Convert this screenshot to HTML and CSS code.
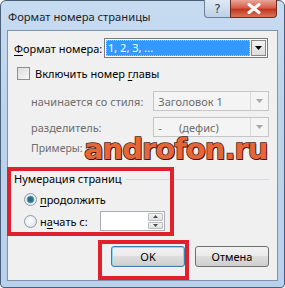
FILE: index.html
```html
<!DOCTYPE html>
<html lang="ru">
<head>
<meta charset="utf-8">
<link rel="stylesheet" href="styles.css">
</head>
<body>
<div class="window">
  <div class="titlebar">
    <span class="title">Формат номера страницы</span>
    <div class="tbtns">
      <span class="tb help">?</span>
      <span class="tb close"><svg width="14" height="11" viewBox="0 0 14 11"><path d="M2 1.5 L12 9.5 M12 1.5 L2 9.5" stroke="#fff" stroke-width="3" stroke-linecap="round"/></svg></span>
    </div>
  </div>
  <div class="client">
    <div class="row r1">
      <span class="lbl"><u>Ф</u>ормат номера:</span>
      <div class="combo active">
        <span class="sel">1, 2, 3, ...</span>
        <span class="dd"><svg width="7" height="4" viewBox="0 0 7 4"><path d="M0 0H7L3.5 4Z" fill="#000"/></svg></span>
      </div>
    </div>
    <div class="row r2">
      <span class="chk"></span>
      <span class="lbl">Включить номер <u>г</u>лавы</span>
    </div>
    <div class="row r3 dis">
      <span class="lbl ind">начинается со стиля:</span>
      <div class="combo off"><span class="val">Заголовок 1</span><span class="dd2"><svg width="7" height="4" viewBox="0 0 7 4"><path d="M0 0H7L3.5 4Z" fill="#a8a8a8"/></svg></span></div>
    </div>
    <div class="row r4 dis">
      <span class="lbl ind">разделитель:</span>
      <div class="combo off"><span class="val">-&nbsp;&nbsp;&nbsp;&nbsp;&nbsp;&nbsp;(дефис)</span><span class="dd2"><svg width="7" height="4" viewBox="0 0 7 4"><path d="M0 0H7L3.5 4Z" fill="#a8a8a8"/></svg></span></div>
    </div>
    <div class="row r5 dis">
      <span class="lbl ind">Примеры:</span>
    </div>
    <div class="group">
      <span class="gtitle">Нумерация страниц</span>
      <span class="gline"></span>
    </div>
    <div class="row r6">
      <span class="radio on"></span>
      <span class="lbl"><u>п</u>родолжить</span>
    </div>
    <div class="row r7">
      <span class="radio"></span>
      <span class="lbl rl">н<u>а</u>чать с:</span>
      <div class="spin"><span class="spinbtns"><span class="sb"><svg width="5" height="3" viewBox="0 0 5 3"><path d="M0 3H5L2.5 0Z" fill="#4d4d4d"/></svg></span><span class="sb"><svg width="5" height="3" viewBox="0 0 5 3"><path d="M0 0H5L2.5 3Z" fill="#4d4d4d"/></svg></span></span></div>
    </div>
    <div class="buttons">
      <span class="btn ok">OK</span>
      <span class="btn">Отмена</span>
    </div>
    <div class="mark m1"></div>
    <div class="mark m2"></div>
    <div class="wm">androfon.ru</div>
  </div>
</div>
</body>
</html>
```
FILE: styles.css
```css
html, body { margin: 0; padding: 0; }
body {
  width: 285px; height: 288px; overflow: hidden;
  font-family: "Noto Sans", "Open Sans", sans-serif;
  font-size: 11px; color: #000;
}
.window {
  box-sizing: border-box;
  width: 285px; height: 288px;
  border: 1px solid #4a6078;
  border-radius: 6px 6px 4px 4px;
  background: linear-gradient(180deg, #c7dbf1 0%, #bcd3ec 40%, #b9d1ea 100%);
  display: flex; flex-direction: column;
  padding: 0 6px 6px 6px;
}
.titlebar {
  height: 29px; display: flex; align-items: flex-start; position: relative;
}
.title {
  margin-top: 8px; margin-left: 1px;
  font-size: 11.2px; color: #1e1e1e;
}
.tbtns {
  margin-left: auto; display: flex; margin-top: -1px; margin-right: 1px;
}
.tb {
  height: 17px; display: flex; align-items: center; justify-content: center;
  border: 1px solid #6b7f96; border-top: none;
}
.help {
  width: 25px; border-radius: 0 0 0 4px; border-right: none;
  background: linear-gradient(180deg, #dfe9f5 0%, #cfdded 50%, #bdd0e6 100%);
  color: #2c3e55; font-size: 12px; font-family: "DejaVu Sans", sans-serif;
}
.close {
  width: 45px; border-radius: 0 0 4px 0;
  background: linear-gradient(180deg, #e7a597 0%, #d5604a 45%, #c2361e 55%, #d9765a 100%);
  border-color: #6d2a20;
}
.client {
  flex: 1; position: relative;
  background: #f0f0f0;
  border: 1px solid #7f93ab;
  padding: 7px 8px 0 6px;
}
.row { display: flex; align-items: center; }
.lbl { white-space: nowrap; }
u { text-decoration-thickness: 1px; text-underline-offset: 2px; }
.r1 { height: 20px; }
.r1 .lbl { width: 90px; }
.combo {
  box-sizing: border-box; height: 20px; display: flex; align-items: center;
}
.combo.active {
  width: 164px; border: 1px solid #7a7a7a; background: #fff; padding: 1px;
}
.sel {
  flex: 1; height: 16px; background: #3399ff; color: #fff; line-height: 16px; padding-left: 2px;
  outline: 1px dotted #a0c8f0; outline-offset: -1px;
}
.dd {
  width: 15px; height: 16px; margin-left: 1px; box-sizing: border-box;
  border: 1px solid #8a8a8a; background: linear-gradient(#f4f4f4, #dcdcdc);
  display: flex; align-items: center; justify-content: center;
}
.r2 { margin-top: 8px; height: 14px; }
.chk {
  width: 11px; height: 11px; border: 1px solid #8e8f8f; margin-left: 3px; margin-right: 5px;
  background: linear-gradient(135deg, #dcdcdc, #f8f8f8);
}
.dis .lbl { color: #6d6d6d; }
.ind { width: 127px; padding-left: 17px; }
.r3 { margin-top: 11px; height: 20px; }
.r4 { margin-top: 6px; height: 20px; }
.combo.off {
  width: 120px; border: 1px solid #c5c5c5; background: #f4f4f4;
}
.val { flex: 1; padding-left: 4px; color: #6d6d6d; }
.dd2 {
  width: 17px; height: 18px; border-left: 1px solid #dadada;
  display: flex; align-items: center; justify-content: center;
}
.r5 { margin-top: 2px; height: 17px; font-size: 10.5px; }
.group { display: flex; align-items: center; margin-top: 14px; height: 16px; }
.gtitle { white-space: nowrap; padding-left: 0; }
.gline { flex: 1; height: 0; border-top: 1px solid #d5dfe5; margin-left: 4px; margin-top: 2px; }
.r6 { margin-top: 5px; height: 17px; }
.radio {
  box-sizing: border-box; width: 13px; height: 13px; border-radius: 50%;
  border: 1px solid #8f9aa3; margin-left: 10px; margin-right: 3px;
  background: radial-gradient(circle at 40% 40%, #ffffff, #d8dde2);
}
.radio.on {
  background: radial-gradient(circle, #2d6e86 0 2.5px, #78b6cc 3.6px, #e9eef1 4.2px);
}
.r7 { margin-top: 3px; height: 20px; }
.rl { width: 60px; }
.spin {
  box-sizing: border-box; width: 65px; height: 20px; border: 1px solid #abadb3; background: #fff;
  display: flex; justify-content: flex-end;
}
.spinbtns { display: flex; flex-direction: column; width: 15px; padding: 1px; gap: 1px; }
.sb {
  flex: 1; border: 1px solid #b8bec4; background: linear-gradient(#f3f3f3, #e1e1e1);
  display: flex; align-items: center; justify-content: center; border-radius: 1px;
}
.buttons {
  display: flex; justify-content: flex-end; gap: 10px; margin-top: 15px; padding-right: 0;
}
.btn {
  box-sizing: border-box; width: 74px; height: 21px; border: 1px solid #707070; border-radius: 3px;
  background: linear-gradient(180deg, #f2f2f2 0%, #ebebeb 45%, #dddddd 50%, #cfcfcf 100%);
  display: flex; align-items: center; justify-content: center;
}
.btn.ok {
  border-color: #3c7fb1;
  box-shadow: inset 0 0 0 1px #8ed7f4;
}
.mark { position: absolute; border: 4px solid #e0202a; }
.m1 { left: -1px; top: 136px; width: 159px; height: 61px; }
.m2 { left: 90px; top: 209px; width: 83px; height: 32px; }
.wm {
  position: absolute; left: 76px; top: 101px;
  font-family: "DejaVu Sans", sans-serif; font-weight: bold; font-size: 29px;
  letter-spacing: -1px;
  color: #e6663a;
  -webkit-text-stroke: 1.5px #4a2418;
  paint-order: stroke fill;
  text-shadow: 1px 1px 0 #3a1a10;
}
```
